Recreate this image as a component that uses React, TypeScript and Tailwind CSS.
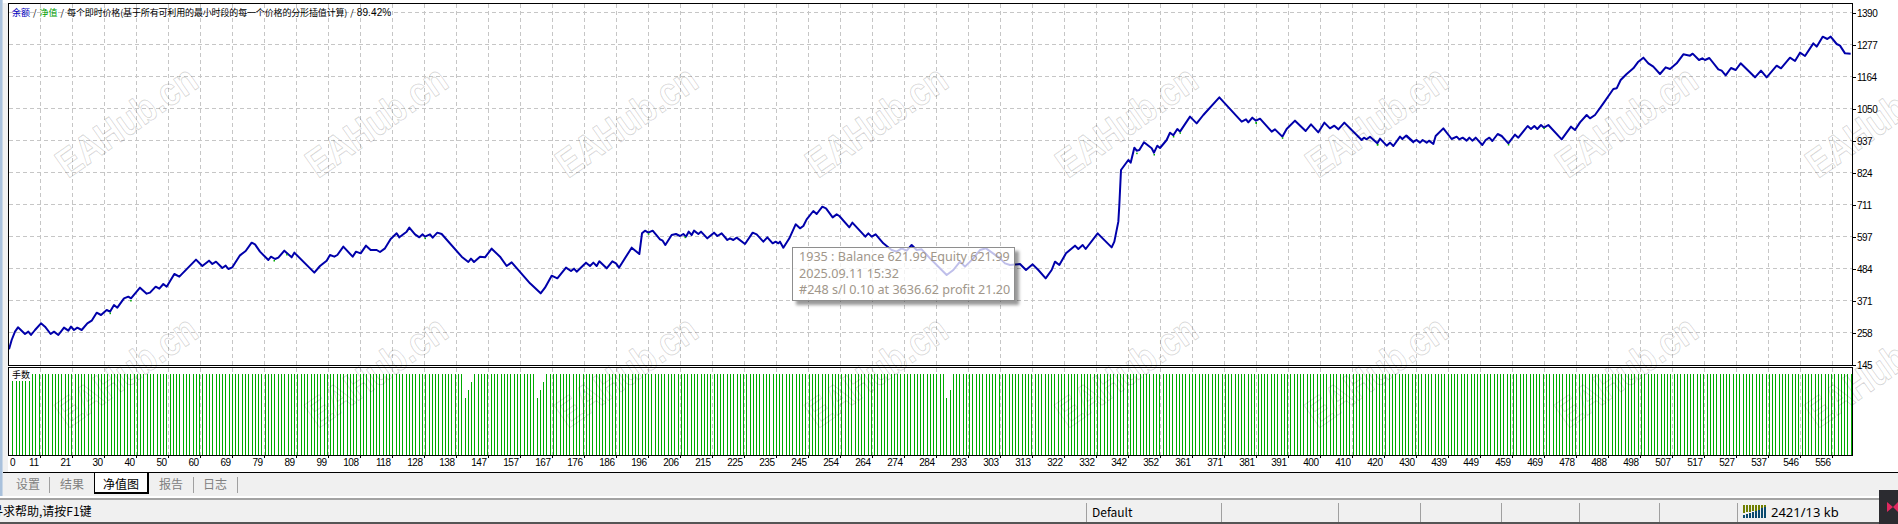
import React from 'react';

type Pt = [number, number];

// traced from the report, grouped by crop: [originX, originY, zoomed points]
const seg = (ox: number, oy: number, pts: Pt[]): Pt[] => pts.map(([x, y]) => [ox + x / 3, oy + y / 3]);

const curve: Pt[] = [
    ...seg(0, 190, [[27,478],[35,450],[45,425],[54,412],[75,432],[85,425],[93,435],[105,420],[123,400],[135,410],[152,432],[162,425],[175,435],[192,413],[205,422],[213,410],[222,420],[232,413],[245,420],[262,400],[275,392],[290,368],[303,375],[320,360],[330,365],[342,345],[352,353],[372,325],[385,320],[393,325],[420,293],[440,311],[450,308],[467,290],[478,296],[490,282],[500,290],[523,252],[538,260],[588,209],[607,228],[627,212],[637,222],[648,215],[667,234],[677,227],[685,237],[697,232],[720,196],[737,183],[755,158],[765,163],[780,185],[805,210],[813,200],[825,207],[835,203],[853,182],[875,202],[883,188],[943,248],[960,228],[980,212],[990,195],[1003,200],[1012,195],[1030,170],[1058,200],[1068,185],[1082,190],[1098,167],[1112,180],[1130,180],[1140,186],[1155,175],[1172,147],[1190,130],[1198,142],[1220,125],[1228,113],[1245,133],[1258,142],[1268,133],[1275,140],[1290,133],[1298,143],[1312,128],[1325,132],[1385,200],[1405,216],[1413,206],[1422,216],[1440,200]]),
    ...seg(470, 190, [[45,202],[65,176],[90,200],[110,228],[125,217],[180,280],[212,310],[225,293],[245,257],[262,265],[288,233],[303,243],[312,236],[320,245],[348,218],[360,228],[370,218],[380,228],[388,214],[410,235],[427,214],[438,220],[447,233],[485,173],[508,192],[516,130],[525,122],[535,128],[548,122],[570,148],[578,152],[586,165],[605,135],[618,132],[630,138],[640,132],[648,140],[656,125],[665,135],[672,122],[685,132],[693,125],[712,145],[732,128],[742,138],[755,130],[772,150],[780,145],[790,150],[800,143],[825,162],[848,128],[860,133],[880,155],[892,142],[908,160],[917,155],[925,160],[930,155],[940,173],[958,145],[977,103],[990,115],[1000,108],[1010,88],[1030,63],[1040,72],[1057,50],[1068,55],[1088,82],[1100,73],[1108,78],[1138,112],[1147,98],[1186,140],[1195,130],[1205,140],[1217,133],[1240,160],[1250,168]]),
    ...seg(760, 220, [[395,90],[410,95],[425,85],[440,92],[455,75],[470,90],[485,88],[510,115],[560,165],[580,150],[600,125],[615,140],[640,115],[660,90],[678,85],[720,115],[735,130],[750,135]]),
    ...seg(940, 80, [[240,552],[258,570],[278,553],[295,570],[317,595],[335,570],[345,545],[358,555],[378,520],[405,497],[415,507],[428,495],[437,507],[473,460],[515,502],[523,485],[535,425],[538,375],[543,270],[565,240],[572,248],[583,203],[590,212],[598,210],[612,187],[635,205],[642,218],[652,197],[660,204],[680,180],[690,158],[700,166],[712,147],[720,155],[750,110],[770,130],[790,105],[838,52],[905,125],[918,118],[925,127],[937,113],[948,122],[960,116],[995,155],[1005,148],[1027,170],[1040,147],[1065,122],[1097,153],[1113,133],[1135,157],[1153,128],[1170,145],[1183,137],[1195,148],[1213,128],[1265,180],[1272,173],[1280,178],[1290,170],[1312,190],[1320,176],[1340,197],[1350,188],[1360,198],[1380,170],[1387,177],[1398,167],[1420,187]]),
    ...seg(1240, 60, [[500,227],[520,245],[530,240],[540,248],[548,240],[560,248],[567,242],[580,252],[587,228],[610,205],[635,237],[650,230],[658,238],[668,233],[680,242],[688,233],[697,242],[707,233],[727,255],[737,240],[748,233],[757,243],[773,222],[785,228],[805,250],[825,224],[835,233],[863,198],[873,207],[883,198],[892,207],[903,195],[912,203],[925,195],[965,238],[993,200],[1005,210],[1020,187],[1040,165],[1050,175],[1065,165],[1090,130],[1120,87],[1130,85]]),
    ...seg(1500, 0, [[362,240],[380,222],[400,205],[415,185],[430,173],[445,190],[460,200],[480,222],[497,202],[510,207],[530,190],[550,163],[570,167],[578,161],[597,180],[607,175],[615,180],[628,174],[655,208],[665,212],[677,226],[693,204],[707,210],[722,190],[765,232],[783,212],[800,232],[830,197],[843,205],[870,173],[885,183],[900,158],[915,168],[940,130],[950,140],[968,110],[982,117],[992,110],[1010,132],[1020,137],[1035,160],[1052,161]]),
];

// small green specks where equity pokes out under the balance line
const specks: Pt[] = [
    ...seg(0, 190, [[330,368],[392,330],[822,210],[860,192],[1275,143]]),
    ...seg(470, 190, [[535,130],[645,140]]),
    ...seg(940, 80, [[590,218],[642,222],[700,168],[720,157],[948,126],[1027,172],[1312,192]]),
    ...seg(1240, 60, [[48,187],[412,252],[805,252],[912,203]]),
];

// "0" sits at the far left of the first cell, the rest end on their tick
const xLabels = [11,21,30,40,50,60,69,79,89,99,108,118,128,138,147,157,167,176,186,196,206,215,225,235,245,254,264,274,284,293,303,313,322,332,342,352,361,371,381,391,400,410,420,430,439,449,459,469,478,488,498,507,517,527,537,546,556];
const yLabels = [1390,1277,1164,1050,937,824,711,597,484,371,258,145];
const gridX = Array.from({ length: 57 }, (_, k) => 40.5 + 32 * k);
const gridY = Array.from({ length: 11 }, (_, k) => 12.5 + 32 * k);

const shortBars: Record<number, number> = { 138: 398, 139: 390, 140: 382, 160: 398, 161: 390, 162: 382, 285: 398, 286: 390 };
const bars = Array.from({ length: 562 }, (_, i) => ({ x: Math.round(12.33 + i * 3.277) + 0.5, top: shortBars[i] ?? 374 }));

const tabs = [
    { label: '设置', w: 'w-[47px]', sep: true },
    { label: '结果', w: 'w-[44px]', sep: false },
];
const tabsAfter = [
    { label: '报告', w: 'w-[45px]' },
    { label: '日志', w: 'w-[44px]' },
];

const statusCells = ['w-[135px]', 'w-[117px]', 'w-[82px]', 'w-[81px]', 'w-[78px]', 'w-[80px]', 'w-[78px]'];

const watermarkPos: Pt[] = [];
for (let r = 0; r < 2; r++) for (let c = 0; c < 8; c++) watermarkPos.push([68 + 250 * c, 179 + 250 * r]);

const Grid: React.FC<{ horizontal?: boolean; y1: number; y2: number }> = ({ horizontal, y1, y2 }) => (
    <g stroke="#c6c6c6" strokeWidth={1} strokeDasharray="4 3" shapeRendering="crispEdges">
        {gridX.map((x) => <line key={x} x1={x} x2={x} y1={y1} y2={y2} />)}
        {horizontal && gridY.map((y) => <line key={y} x1={9} x2={1852} y1={y} y2={y} />)}
    </g>
);

const StatusIcon: React.FC = () => (
    <svg width="24" height="14" viewBox="0 0 24 14" className="block">
        {[0, 1, 2, 3, 4, 5, 6, 7].map((i) => (
            <g key={i} shapeRendering="crispEdges">
                <rect x={i * 3} y={0} width={2} height={8 - i * 0.6} fill="#6f7f00" />
                <rect x={i * 3} y={10 - i * 1.1} width={2} height={3 + i * 1.1} fill="#0b4a6e" />
            </g>
        ))}
    </svg>
);

export default function App() {
    return (
        <div className="relative flex h-[524px] w-[1898px] flex-col overflow-hidden bg-[#f0f0f0] font-['Noto_Sans_CJK_SC','Liberation_Sans',sans-serif] text-black">
            <div className="flex h-[496px]">
                {/* splitter strip on the left */}
                <div className="flex w-[3px] flex-col border-r border-[#c9d7e6] bg-[#a9c1dc] pt-[3px]" />
                <div className="flex flex-1 flex-col">
                    <div className="flex h-[472px] bg-white pt-[3px]">
                        <div className="w-[5px] bg-[#f0f0f0]" />
                        <div className="flex w-[1845px] flex-col font-['Liberation_Sans',sans-serif]">
                            <div className="relative h-[363px] border border-black">
                                <svg width="1843" height="361" viewBox="9 4 1843 361" className="block">
                                    <Grid horizontal y1={4} y2={365} />
                                    <polyline points={curve.map((p) => p.join(',')).join(' ')} fill="none" stroke="#0000aa" strokeWidth={2} strokeLinejoin="round" />
                                    {specks.map(([x, y], i) => <rect key={i} x={x - 0.5} y={y} width={1.5} height={1.5} fill="#00aa00" />)}
                                </svg>
                                <div className="absolute left-[3px] top-[3px] flex items-center gap-[3px] whitespace-nowrap text-[9px] leading-[11px] font-['Noto_Sans_CJK_SC',sans-serif]">
                                    <span className="text-[#0000c0]">余额</span>
                                    <span>/</span>
                                    <span className="text-[#00a000]">净值</span>
                                    <span>/</span>
                                    <span className="tracking-[-0.15px]">每个即时价格(基于所有可利用的最小时段的每一个价格的分形插值计算)</span>
                                    <span>/</span>
                                    <span className="text-[10px] tracking-[0.1px] font-['Liberation_Sans',sans-serif]">89.42%</span>
                                </div>
                            </div>
                            <div className="relative mt-px h-[89px] border border-black">
                                <svg width="1843" height="87" viewBox="9 368 1843 87" className="block">
                                    <Grid y1={368} y2={455} />
                                    <g stroke="#00aa00" strokeWidth={1} shapeRendering="crispEdges">
                                        {bars.map((b, i) => <line key={i} x1={b.x} x2={b.x} y1={b.top} y2={454.5} />)}
                                    </g>
                                </svg>
                                <div className="absolute left-[2px] top-px bg-white px-px text-[9px] leading-[12px] font-['Noto_Sans_CJK_SC',sans-serif]">手数</div>
                            </div>
                            <div className="flex h-[16px] text-[10px] leading-[14px] tracking-[-0.5px]">
                                {xLabels.map((n, i) => (
                                    <div key={n} className={i === 0 ? 'relative flex w-[32.5px] shrink-0 justify-between pl-[2px] pr-[2px]' : 'relative flex w-[32px] shrink-0 justify-end pr-[2px]'}>
                                        {i === 0 && <span>0</span>}
                                        <span>{n}</span>
                                        <span className="absolute right-0 top-0 h-[2px] w-px bg-black" />
                                    </div>
                                ))}
                            </div>
                        </div>
                        <div className="-mt-[5.5px] flex flex-1 flex-col text-[10px] tracking-[-0.5px] font-['Liberation_Sans',sans-serif]">
                            {yLabels.map((n) => (
                                <div key={n} className="flex h-[32px] shrink-0 items-center">
                                    <span className="mr-[1px] h-px w-[3px] bg-black" />
                                    {n}
                                </div>
                            ))}
                        </div>
                    </div>
                    {/* tab strip */}
                    <div className="flex h-[24px] border-t border-black pl-0 text-[12px] leading-[20px] text-[#808080]">
                        {tabs.map((t) => (
                            <div key={t.label} className={`flex ${t.w} justify-center pt-px`}>
                                <span className={t.sep ? 'ml-[-3px] mr-auto pl-[16px]' : 'mx-auto'}>{t.label}</span>
                                {t.sep && <span className="my-[3px] h-[16px] w-px bg-[#a0a0a0]" />}
                            </div>
                        ))}
                        <div className="flex h-[21px] w-[55px] justify-center border-b-2 border-l border-r-2 border-black bg-white pt-px text-black">净值图</div>
                        {tabsAfter.map((t) => (
                            <div key={t.label} className={`flex ${t.w} items-start justify-end pt-px`}>
                                <span className="mr-[10px]">{t.label}</span>
                                <span className="my-[3px] h-[16px] w-px bg-[#a0a0a0]" />
                            </div>
                        ))}
                    </div>
                </div>
            </div>
            {/* status bar */}
            <div className="flex h-[28px] flex-col border-t-2 border-white">
                <div className="flex h-[24px] border-t-2 border-[#a3a3a3] text-[12px] leading-[22px]">
                    <div className="w-[1086px] overflow-hidden whitespace-nowrap">
                        <span className="ml-[-9px] block">寻求帮助,请按F1键</span>
                    </div>
                    {statusCells.map((w, i) => (
                        <div key={w + i} className={`${w} mt-[3px] border-l border-[#a0a0a0] pl-[5px] leading-[18px]`}>
                            {i === 0 ? 'Default' : ''}
                        </div>
                    ))}
                    <div className="mt-[3px] flex flex-1 items-center gap-[4px] border-l border-[#a0a0a0] pb-[2px] pl-[5px] text-[13px] font-['Noto_Sans',sans-serif]">
                        <StatusIcon />
                        <span>2421/13 kb</span>
                    </div>
                </div>
                <div className="h-[2px] bg-[#555555]" />
            </div>
            {/* tooltip over the curve */}
            <div className="absolute left-[792px] top-[247px] h-[54px] w-[223px] border border-[#8e8e8e] bg-white/75 pl-[6px] pt-px text-[12.6px] leading-[16.6px] text-[#a0968a] shadow-[4px_4px_3px_rgba(0,0,0,0.4)] font-['Noto_Sans',sans-serif] whitespace-nowrap">
                <div>1935 : Balance 621.99 Equity 621.99</div>
                <div>2025.09.11 15:32</div>
                <div>#248 s/l 0.10 at 3636.62 profit 21.20</div>
            </div>
            {/* watermark across the whole window */}
            <svg width="1898" height="524" className="pointer-events-none absolute left-0 top-0">
                {watermarkPos.map(([x, y]) => (
                    <text key={`${x}-${y}`} x={x} y={y} transform={`rotate(-35 ${x} ${y})`} fontFamily="'Liberation Sans', sans-serif" fontWeight="bold" fontSize="40" textLength={162} lengthAdjust="spacingAndGlyphs" fill="none" stroke="#000000" strokeOpacity="0.17" strokeWidth="1" strokeLinejoin="round">
                        EAHub.cn
                    </text>
                ))}
            </svg>
            {/* overlay widget in the corner */}
            <div className="absolute bottom-0 right-0 h-[34px] w-[19px] bg-[#2b2b30]">
                <svg width="19" height="34" viewBox="0 0 19 34" className="block">
                    <path d="M8 12 L14 17 L8 22 Z M19 12 L14 17 L19 22 Z" fill="#e0285f" />
                </svg>
            </div>
        </div>
    );
}
